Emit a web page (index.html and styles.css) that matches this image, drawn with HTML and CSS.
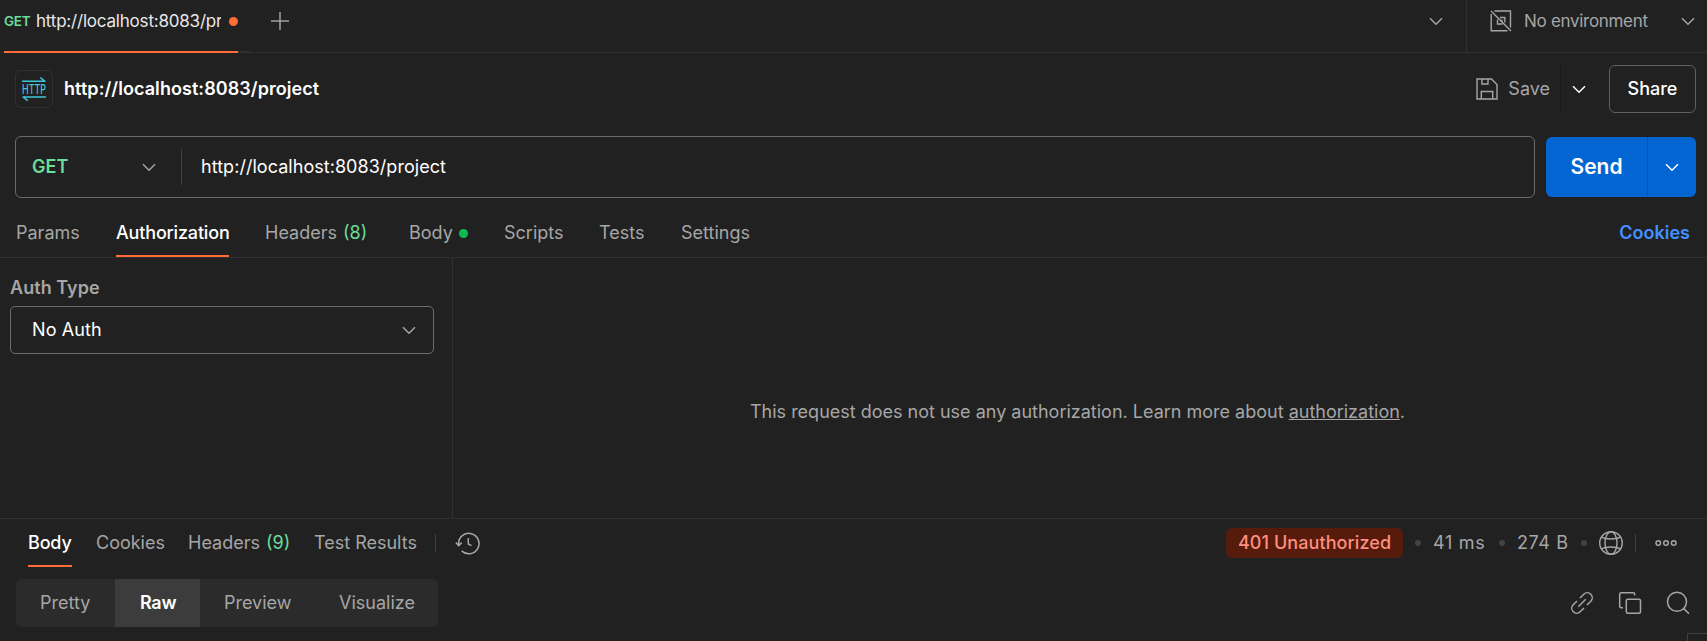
FILE: index.html
```html
<!DOCTYPE html>
<html lang="en">
<head>
<meta charset="utf-8">
<title>http://localhost:8083/project</title>
<link rel="stylesheet" href="styles.css">
</head>
<body>
<svg class="defs" width="0" height="0">
  <symbol id="chev" viewBox="0 0 14 9"><path d="M1 1.3 7 7.3 13 1.3" fill="none" stroke="currentColor" stroke-width="1.5"/></symbol>
</svg>
<div class="app">
  <header class="tabbar">
    <div class="tab">
      <span class="tab-method">GET</span>
      <span class="tab-name">http://localhost:8083/project</span>
      <i class="unsaved"></i>
    </div>
    <div class="tab-edge"></div>
    <svg class="plus" width="18" height="18" viewBox="0 0 18 18"><path d="M9 0v18M0 9h18" stroke="#a0a0a0" stroke-width="1.5"/></svg>
    <svg class="chev tabs-chev"><use href="#chev"/></svg>
    <div class="env">
      <svg width="22" height="22" viewBox="0 0 22 22" fill="none" stroke="#a6a6a6" stroke-width="1.4"><path d="M4.5 1H20.5V17.5M1.2 4V20.8H17.5M1 1 21 21M10 7.5H14.8V12.5M7.5 9.5V14H12.5M10 10.5h2v2"/></svg>
      <span class="env-name">No environment</span>
      <svg class="chev"><use href="#chev"/></svg>
    </div>
  </header>

  <section class="title-row">
    <div class="http-badge">
      <svg width="26" height="24" viewBox="0 0 26 24"><g fill="none" stroke="#3cc8dc" stroke-width="1.4"><path d="M1 4.2H24.5M19.3 .6 24 4.2M25 20H1.5M2 20 6.7 23.6"/></g><text x="1" y="17" textLength="24" lengthAdjust="spacingAndGlyphs" class="http-text">HTTP</text></svg>
    </div>
    <h1 class="title">http://localhost:8083/project</h1>
    <div class="save">
      <svg width="22" height="22" viewBox="0 0 22 22" fill="none" stroke="#a6a6a6" stroke-width="1.4"><path d="M1 1H15.5L21 6.5V21H1ZM6 1V6H12V1M5.3 21V13.5H16.7V21"/></svg>
      <span>Save</span>
    </div>
    <div class="save-more"><svg class="chev"><use href="#chev"/></svg></div>
    <button class="share">Share</button>
  </section>

  <section class="url-row">
    <div class="url-box">
      <div class="method"><span>GET</span><svg class="chev"><use href="#chev"/></svg></div>
      <div class="url">http://localhost:8083/project</div>
    </div>
    <div class="send">
      <span class="send-label">Send</span>
      <span class="send-more"><svg class="chev"><use href="#chev"/></svg></span>
    </div>
  </section>

  <nav class="req-tabs">
    <span class="rt w-params">Params</span>
    <span class="rt active w-auth">Authorization</span>
    <span class="rt w-headers">Headers <b class="count">(8)</b></span>
    <span class="rt w-body">Body <i class="has-body"></i></span>
    <span class="rt w-scripts">Scripts</span>
    <span class="rt w-tests">Tests</span>
    <span class="rt">Settings</span>
    <span class="cookies-link">Cookies</span>
  </nav>

  <main class="auth">
    <div class="auth-left">
      <label class="auth-label">Auth Type</label>
      <div class="auth-select"><span>No Auth</span><svg class="chev"><use href="#chev"/></svg></div>
    </div>
    <div class="auth-right"><p class="auth-msg">This request does not use any authorization. Learn more about <u>authorization</u>.</p></div>
  </main>

  <section class="res-head">
    <span class="rs active w-rbody">Body</span>
    <span class="rs w-rcookies">Cookies</span>
    <span class="rs w-rheaders">Headers <b class="count">(9)</b></span>
    <span class="rs w-rtests">Test Results</span>
    <i class="vline"></i>
    <svg class="history" width="25" height="23" viewBox="0 0 25 23" fill="none" stroke="#a6a6a6" stroke-width="1.5"><path d="M3.6 13.5V11.5A10.2 10.2 0 1 1 6.7 18.9M.8 10.6 3.7 13.6 6.7 10.6M13.3 6V12L16.5 13.6"/></svg>
    <div class="stats">
      <span class="status">401 Unauthorized</span>
      <i class="sep s1"></i><span class="time">41 ms</span>
      <i class="sep s2"></i><span class="size">274 B</span>
      <i class="sep s3"></i>
      <svg class="globe" width="26" height="26" viewBox="0 0 26 26" fill="none" stroke="#a6a6a6" stroke-width="1.4"><circle cx="13" cy="13" r="11.3"/><ellipse cx="13" cy="13" rx="6" ry="11.3"/><path d="M3.2 7.2C8 9.6 18 9.6 22.8 7.2M3.2 18.8C8 16.4 18 16.4 22.8 18.8"/></svg>
      <i class="vline"></i>
      <svg class="dots" width="22" height="8" viewBox="0 0 22 8" fill="none" stroke="#a6a6a6" stroke-width="1.5"><circle cx="3.3" cy="4" r="2.3"/><circle cx="11" cy="4" r="2.3"/><circle cx="18.7" cy="4" r="2.3"/></svg>
    </div>
  </section>

  <section class="res-view">
    <div class="segments">
      <span class="seg g1">Pretty</span><span class="seg g2 on">Raw</span><span class="seg g3">Preview</span><span class="seg g4">Visualize</span>
    </div>
    <div class="actions">
      <svg width="24" height="24" viewBox="0 0 24 24" fill="none" stroke="#a6a6a6" stroke-width="1.5"><path d="M8.3 15.7 15.7 8.3M10 7 13.8 3.2A4.95 4.95 0 0 1 20.8 10.2L17 14M14 17 10.2 20.8A4.95 4.95 0 0 1 3.2 13.8L7 10"/></svg>
      <svg width="24" height="24" viewBox="0 0 24 24" fill="none" stroke="#a6a6a6" stroke-width="1.5"><rect x="8.3" y="8.3" width="14.2" height="14" rx="1.5"/><path d="M5 16.7H3.2Q1.7 16.7 1.7 15.2V3.3Q1.7 1.8 3.2 1.8H15.2Q16.7 1.8 16.7 3.3V4.6"/></svg>
      <svg width="24" height="24" viewBox="0 0 24 24" fill="none" stroke="#a6a6a6" stroke-width="1.5"><circle cx="11" cy="10.7" r="9.5"/><path d="M17.6 17.4 23 22.8"/></svg>
    </div>
  </section>
  <div class="editor-edge"></div>
</div>
</body>
</html>
```
FILE: styles.css
```css
* { box-sizing: border-box; }
body { margin: 0; background: #212121; color: #a6a6a6; font: 18px/24px Inter, "Liberation Sans", sans-serif; white-space: nowrap; }
.defs { position: absolute; }
.app { position: relative; width: 1707px; height: 641px; overflow: hidden; display: flex; flex-direction: column; }
svg { display: block; flex: none; overflow: visible; }
.chev { width: 14px; height: 9px; }

.tabbar { height: 53px; flex: none; display: flex; border-bottom: 1px solid #303030; }
.tab { width: 234px; height: 53px; margin-left: 4px; border-bottom: 2px solid #ff6c37; display: flex; align-items: center; padding-bottom: 9px; flex: none; }
.tab-method { width: 32px; font-size: 13.5px; font-weight: 600; letter-spacing: -.25px; color: #6bdd9a; }
.tab-name { width: 185px; overflow: hidden; font-size: 17px; letter-spacing: -.2px; color: #e8e8e8; }
.unsaved { width: 9px; height: 9px; border-radius: 50%; background: #ff6c37; margin-left: 8px; }
.tab-edge { width: 12px; height: 52px; border-bottom: 1px solid #303030; }
.plus { margin: 12px 0 0 21px; }
.tabs-chev { margin: 17px 23px 0 auto; }
.env { width: 241px; height: 52px; border-left: 1px solid #303030; display: flex; align-items: center; padding: 0 12px 10px 23px; }
.env-name { margin-left: 12px; font-size: 17px; letter-spacing: -.3px; }
.env .chev { margin-left: auto; }

.title-row { height: 83px; flex: none; display: flex; align-items: center; padding: 0 11px 11px 15px; }
.http-badge { width: 38px; height: 38px; border: 1px solid #303030; border-radius: 6px; display: flex; align-items: center; justify-content: center; }
.http-text { font: 500 13.5px Inter, sans-serif; fill: #3cc8dc; }
.title { margin: 0 0 0 11px; font-size: 18px; font-weight: 600; color: #fff; letter-spacing: .06px; }
.save { margin-left: auto; display: flex; align-items: center; gap: 10px; }
.save-more { height: 48px; width: 49px; margin-left: 10px; padding-left: 11px; display: flex; align-items: center; border-left: 1px solid #181818; color: #fff; }
.share { width: 87px; height: 48px; border: 1px solid #606060; border-radius: 6px; background: none; color: #fff; font: 500 18px Inter, sans-serif; padding: 0 0 2px; }

.url-row { height: 62px; flex: none; display: flex; align-items: center; padding: 0 11px 0 15px; gap: 11px; }
.url-box { width: 1520px; height: 62px; border: 1px solid #6b6b6b; border-radius: 6px; display: flex; align-items: center; }
.method { width: 166px; height: 36px; padding: 0 25px 0 16px; border-right: 1px solid #404040; display: flex; align-items: center; justify-content: space-between; }
.method span { font-weight: 600; color: #6bdd9a; }
.url { margin-left: 19px; color: #fff; letter-spacing: .04px; }
.send { width: 150px; height: 60px; border-radius: 6px; background: #0265d2; color: #fff; display: flex; overflow: hidden; }
.send-label { width: 101px; text-align: center; font-size: 21px; font-weight: 600; line-height: 60px; }
.send-more { flex: 1; border-left: 1px solid #0952a4; display: flex; align-items: center; justify-content: center; }

.req-tabs { height: 60px; flex: none; display: flex; align-items: flex-start; padding: 12px 17px 0 16px; border-bottom: 1px solid #303030; }
.rt { height: 47px; padding-top: 11px; display: flex; align-items: flex-start; gap: 6px; }
.rt.active, .rs.active { color: #fff; font-weight: 500; letter-spacing: -.17px; border-bottom: 2px solid #ff6c37; }
.count { color: #6bdd9a; font-weight: 400; }
.has-body { width: 9px; height: 9px; margin-top: 8px; border-radius: 50%; background: #0cbb52; }
.w-params { width: 63px; margin-right: 37px; }
.w-auth { width: 113px; margin-right: 36px; }
.w-headers { width: 103px; margin-right: 41px; }
.w-body { width: 60px; margin-right: 35px; }
.w-scripts { width: 58px; margin-right: 37px; }
.w-tests { width: 46px; margin-right: 36px; }
.cookies-link { margin: 11px 0 0 auto; color: #4290ff; font-weight: 600; }

.auth { height: 260px; flex: none; display: flex; }
.auth-left { width: 453px; padding: 18px 18px 0 10px; border-right: 1px solid #303030; }
.auth-label { display: block; font-weight: 600; letter-spacing: .05px; margin-bottom: 6px; }
.auth-select { width: 424px; height: 48px; border: 1px solid #6b6b6b; border-radius: 5px; padding: 0 17px 0 21px; display: flex; align-items: center; justify-content: space-between; }
.auth-select span { color: #fff; letter-spacing: .1px; }
.auth-right { flex: 1; display: flex; justify-content: center; padding: 142px 5px 0 0; }
.auth-msg { margin: 0; }

.res-head { height: 61px; flex: none; display: flex; align-items: flex-start; border-top: 1px solid #303030; padding-left: 28px; }
.rs { height: 48px; padding-top: 12px; display: flex; gap: 6px; }
.w-rbody { width: 44px; margin-right: 24px; }
.w-rcookies { width: 69px; margin-right: 23px; }
.w-rheaders { width: 102px; margin-right: 24px; }
.w-rtests { width: 103px; margin-right: 18px; }
.vline { width: 1px; height: 18px; margin-top: 15px; background: #404040; }
.history { margin: 13px 0 0 19px; }
.stats { margin-left: auto; width: 481px; height: 48px; display: flex; align-items: center; }
.status { width: 177px; height: 30px; border-radius: 6px; background: #561b0b; color: #ff8e80; line-height: 30px; text-align: center; font-weight: 500; letter-spacing: .08px; }
.sep { width: 6px; height: 6px; border-radius: 50%; background: #424242; flex: none; }
.s1 { margin: 0 12px 0 12px; }
.time { width: 54px; letter-spacing: .7px; }
.s2 { margin: 0 12px 0 12px; }
.size { width: 52px; letter-spacing: .6px; }
.s3 { margin: 0 11px 0 12px; }
.stats .vline { margin: 0 19px 0 11px; }

.res-view { height: 48px; flex: none; display: flex; padding: 0 17px 0 16px; justify-content: space-between; align-items: center; }
.segments { width: 422px; height: 48px; border-radius: 6px; overflow: hidden; background: #2b2b2b; display: flex; }
.seg { line-height: 48px; }
.on { background: #3c3c3c; color: #fff; font-weight: 600; letter-spacing: -.3px; }
.g1 { width: 99px; padding-left: 24px; }
.g2 { width: 85px; padding-left: 25px; }
.g3 { width: 115px; padding-left: 24px; }
.g4 { padding-left: 24px; }
.actions { display: flex; gap: 24px; }
.editor-edge { width: 20px; height: 8px; margin: 6px 0 0 auto; border-top: 1px solid #404040; border-left: 1px solid #404040; }
```
